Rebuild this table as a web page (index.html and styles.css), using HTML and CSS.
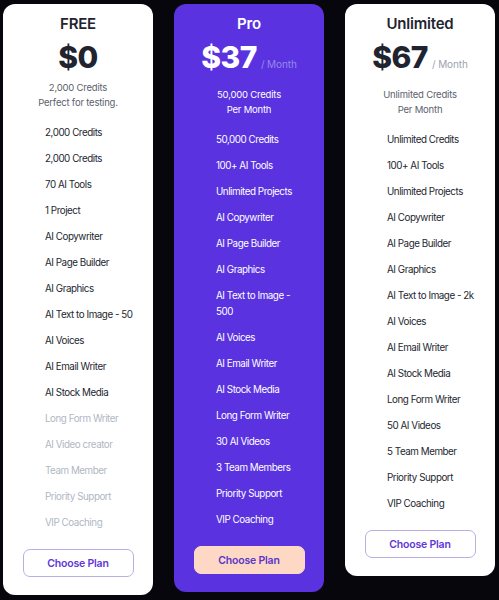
FILE: index.html
```html
<!DOCTYPE html>
<html lang="en">
<head>
<meta charset="utf-8">
<title>Pricing</title>
<link rel="stylesheet" href="styles.css">
</head>
<body>
<main class="pricing">
  <section class="card">
    <h2 class="card__title">FREE</h2>
    <div class="price"><span class="price__amount">$0</span></div>
    <p class="card__sub">2,000 Credits<br>Perfect for testing.</p>
    <ul class="features">
      <li>2,000 Credits</li>
      <li>2,000 Credits</li>
      <li>70 AI Tools</li>
      <li>1 Project</li>
      <li>AI Copywriter</li>
      <li>AI Page Builder</li>
      <li>AI Graphics</li>
      <li>AI Text to Image - 50</li>
      <li>AI Voices</li>
      <li>AI Email Writer</li>
      <li>AI Stock Media</li>
      <li class="is-off">Long Form Writer</li>
      <li class="is-off">AI Video creator</li>
      <li class="is-off">Team Member</li>
      <li class="is-off">Priority Support</li>
      <li class="is-off">VIP Coaching</li>
    </ul>
    <button class="btn">Choose Plan</button>
  </section>

  <section class="card card--pro">
    <h2 class="card__title">Pro</h2>
    <div class="price"><span class="price__amount">$37</span><span class="price__per">/ Month</span></div>
    <p class="card__sub">50,000 Credits<br>Per Month</p>
    <ul class="features">
      <li>50,000 Credits</li>
      <li>100+ AI Tools</li>
      <li>Unlimited Projects</li>
      <li>AI Copywriter</li>
      <li>AI Page Builder</li>
      <li>AI Graphics</li>
      <li>AI Text to Image - 500</li>
      <li>AI Voices</li>
      <li>AI Email Writer</li>
      <li>AI Stock Media</li>
      <li>Long Form Writer</li>
      <li>30 AI Videos</li>
      <li>3 Team Members</li>
      <li>Priority Support</li>
      <li>VIP Coaching</li>
    </ul>
    <button class="btn btn--peach">Choose Plan</button>
  </section>

  <section class="card">
    <h2 class="card__title">Unlimited</h2>
    <div class="price"><span class="price__amount">$67</span><span class="price__per">/ Month</span></div>
    <p class="card__sub">Unlimited Credits<br>Per Month</p>
    <ul class="features">
      <li>Unlimited Credits</li>
      <li>100+ AI Tools</li>
      <li>Unlimited Projects</li>
      <li>AI Copywriter</li>
      <li>AI Page Builder</li>
      <li>AI Graphics</li>
      <li>AI Text to Image - 2k</li>
      <li>AI Voices</li>
      <li>AI Email Writer</li>
      <li>AI Stock Media</li>
      <li>Long Form Writer</li>
      <li>50 AI Videos</li>
      <li>5 Team Member</li>
      <li>Priority Support</li>
      <li>VIP Coaching</li>
    </ul>
    <button class="btn">Choose Plan</button>
  </section>
</main>
</body>
</html>
```

FILE: styles.css
```css
* { box-sizing: border-box; }

html, body {
  margin: 0;
  background: #06060c;
}

body {
  font-family: Inter, "Noto Sans", sans-serif;
  color: #1f2430;
  width: 499px;
  height: 600px;
  overflow: hidden;
}

.pricing {
  display: flex;
  align-items: flex-start;
  gap: 21px;
  padding: 4px 3px;
}

.card {
  width: 150px;
  flex: 0 0 150px;
  background: #ffffff;
  border-radius: 12px;
  padding: 10px 0 18px;
  display: flex;
  flex-direction: column;
  align-items: center;
}

.card--pro {
  background: #5a32e0;
  color: #ffffff;
}

.card__title {
  margin: 0;
  font-size: 15px;
  line-height: 20px;
  font-weight: 600;
  letter-spacing: -0.2px;
}

.price {
  margin-top: 6px;
  display: flex;
  align-items: baseline;
  justify-content: center;
  line-height: 34px;
}

.price__amount {
  font-size: 30px;
  font-weight: 800;
  letter-spacing: -0.5px;
}

.price__per {
  margin-left: 4px;
  font-size: 10px;
  color: #9ca3af;
  letter-spacing: -0.1px;
}

.card--pro .price__per {
  color: #9789ec;
}

.card__sub {
  margin: 7px 0 0;
  font-size: 9.5px;
  line-height: 14.5px;
  color: #5b616d;
  text-align: center;
  letter-spacing: -0.2px;
}

.card--pro .card__sub {
  color: #ffffff;
}

.features {
  list-style: none;
  margin: 15px 0 0;
  padding: 0 20px 0 42px;
  width: 100%;
  display: flex;
  flex-direction: column;
  gap: 10px;
  font-size: 9.8px;
  line-height: 16px;
  letter-spacing: -0.45px;
  color: #23272f;
}

.card--pro .features {
  color: #ffffff;
}

.features li.is-off {
  color: #b0b7c3;
}

.btn {
  margin-top: 18px;
  width: 111px;
  height: 28px;
  border: 1px solid #bcaee4;
  border-radius: 7px;
  background: #ffffff;
  color: #6236d6;
  font-family: inherit;
  font-size: 10.5px;
  font-weight: 600;
  letter-spacing: -0.2px;
  cursor: pointer;
}

.btn--peach {
  background: #fdd8c5;
  border-color: #fdd8c5;
  color: #5b35c8;
}
```
